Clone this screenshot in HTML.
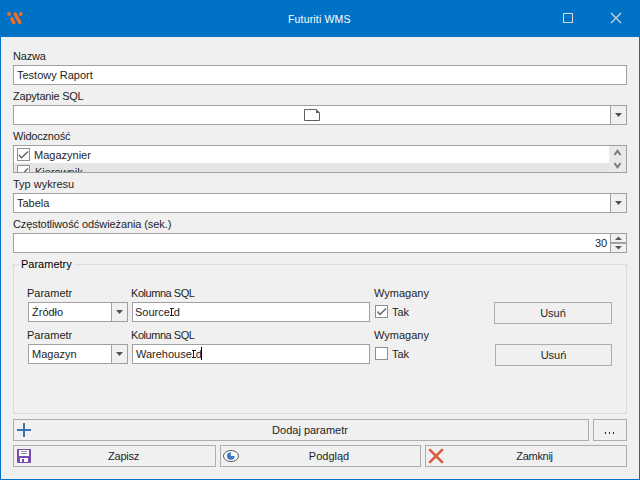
<!DOCTYPE html>
<html><head><meta charset="utf-8">
<style>
*{box-sizing:border-box;margin:0;padding:0}
html,body{width:640px;height:480px;overflow:hidden;background:#F0F0F0}
body{position:relative;font-family:"Liberation Sans",sans-serif;font-size:11px;color:#1E1E1E}
.a{position:absolute}
.win{position:absolute;left:0;top:0;width:640px;height:480px;border:1px solid #0072C6;border-top:none;background:#F0F0F0}
.title{position:absolute;left:0;top:0;width:640px;height:37px;background:#0072C6}
.lbl{position:absolute;white-space:nowrap;line-height:13px;height:13px}
.box{position:absolute;background:#fff;border:1px solid #A0A0A0}
.btn{position:absolute;background:#F0F0F0;border:1px solid #ADADAD}
.ddb{position:absolute;background:#F0F0F0;border-left:1px solid #A0A0A0}
svg{position:absolute;overflow:visible}
.cb{position:absolute;width:13px;height:13px;border:1px solid #8F8F8F;background:#fff}
.I{display:inline-block;width:4px;height:8px;margin:0;border-top:1px solid #1E1E1E;border-bottom:1px solid #1E1E1E;background:linear-gradient(#1E1E1E,#1E1E1E) no-repeat 1.5px 0/1px 100%}
.ct{position:absolute;white-space:nowrap;line-height:13px;height:13px;text-align:center}
</style></head><body>
<div class="win"></div>
<div class="title"></div>
<!-- app icon -->
<svg style="left:0;top:0" width="40" height="37">
  <g fill="#F26D21" stroke="#F26D21" stroke-linecap="round">
    <circle cx="9" cy="14" r="1.9" stroke="none"/>
    <circle cx="20.8" cy="14" r="1.9" stroke="none"/>
    <line x1="15.2" y1="14" x2="19.9" y2="22.6" stroke-width="3.4"/>
    <line x1="11.8" y1="18.9" x2="13.8" y2="22.8" stroke-width="3.4"/>
  </g>
</svg>
<div class="lbl" style="left:288px;top:13px;color:#fff;font-size:10.5px;letter-spacing:0.17px">Futuriti WMS</div>
<!-- maximize / close -->
<svg style="left:0;top:0" width="640" height="37">
  <rect x="563.5" y="13.5" width="9" height="9" fill="none" stroke="#DADADA" stroke-width="1"/>
  <path d="M611 13 L621 23 M621 13 L611 23" stroke="#DADADA" stroke-width="1.1" fill="none"/>
</svg>

<div class="lbl" style="left:13px;top:50px;letter-spacing:-0.2px">Nazwa</div>
<div class="box" style="left:13px;top:65px;width:614px;height:20px"></div>
<div class="lbl" style="left:17px;top:69px">Testowy Raport</div>

<div class="lbl" style="left:13px;top:90px;letter-spacing:-0.22px">Zapytanie SQL</div>
<div class="box" style="left:13px;top:105px;width:614px;height:20px"><div class="ddb" style="left:596px;top:0;width:16px;height:18px"></div></div>
<svg style="left:0;top:0" width="640" height="480">
  <path d="M304.5 109.5 H316 L319.5 113 V120.5 H304.5 Z" fill="#fff" stroke="#5F5F5F" stroke-width="1"/>
  <path d="M316 109 L320 113 H316 Z" fill="#5F5F5F"/>
  <path d="M615 113 H622 L618.5 117 Z" fill="#525252"/>
</svg>

<div class="lbl" style="left:13px;top:130px;letter-spacing:-0.2px">Widoczność</div>
<div class="box" style="left:13px;top:145px;width:614px;height:28px;overflow:hidden">
  <div class="a" style="left:0;top:17px;width:595px;height:10px;background:#E5E5E5"></div>
  <div class="a" style="left:595px;top:0;width:17px;height:26px;background:#E9E9E9"></div>
</div>
<div class="cb" style="left:17px;top:148px"></div>
<div class="lbl" style="left:34px;top:149px">Magazynier</div>
<div class="a" style="left:14px;top:163px;width:594px;height:9px;overflow:hidden">
  <div class="cb" style="left:3px;top:2px"></div>
  <svg style="left:0;top:0" width="40" height="20"><path d="M5 9 L7.5 11.8 L14 5.5" stroke="#5A5A5A" stroke-width="1.2" fill="none"/></svg>
  <div class="lbl" style="left:21px;top:3px">Kierownik</div>
</div>
<svg style="left:0;top:0" width="640" height="480">
  <path d="M19 155 L21.5 157.8 L28 151.5" stroke="#5A5A5A" stroke-width="1.2" fill="none"/>
  <path d="M614.5 155 L617.5 150.8 L620.5 155" stroke="#7C7C7C" stroke-width="2" fill="none"/>
  <path d="M614.5 163.2 L617.5 167.4 L620.5 163.2" stroke="#7C7C7C" stroke-width="2" fill="none"/>
</svg>

<div class="lbl" style="left:13px;top:178px">Typ wykresu</div>
<div class="box" style="left:13px;top:193px;width:614px;height:20px"><div class="ddb" style="left:596px;top:0;width:16px;height:18px"></div></div>
<div class="lbl" style="left:17px;top:197px">Tabela</div>
<svg style="left:0;top:0" width="640" height="480"><path d="M615 201 H622 L618.5 205 Z" fill="#525252"/></svg>

<div class="lbl" style="left:13px;top:218px;letter-spacing:-0.1px">Częstotliwość odświeżania (sek.)</div>
<div class="box" style="left:13px;top:233px;width:614px;height:20px"><div class="ddb" style="left:596px;top:0;width:16px;height:18px"><div class="a" style="left:0;top:8px;width:15px;height:2px;background:#A0A0A0"></div></div></div>
<div class="lbl" style="left:595px;top:237px">30</div>
<svg style="left:0;top:0" width="640" height="480">
  <path d="M615 240 H622 L618.5 236.5 Z" fill="#585858"/>
  <path d="M615 246 H622 L618.5 249.5 Z" fill="#585858"/>
</svg>

<!-- group box -->
<div class="a" style="left:13px;top:264px;width:614px;height:150px;border:1px solid #DCDCDC"></div>
<div class="lbl" style="left:19px;top:258px;padding:0 2px;background:#F0F0F0;color:#000">Parametry</div>

<!-- row 1 -->
<div class="lbl" style="left:27px;top:287px">Parametr</div>
<div class="box" style="left:28px;top:302px;width:100px;height:20px"><div class="ddb" style="left:82px;top:0;width:16px;height:18px"></div></div>
<div class="lbl" style="left:32px;top:306px">Źródło</div>
<div class="lbl" style="left:131px;top:287px;letter-spacing:-0.45px">Kolumna SQL</div>
<div class="box" style="left:132px;top:302px;width:238px;height:20px"></div>
<div class="lbl" style="left:135px;top:306px">Source<span class="I"></span>d</div>
<div class="lbl" style="left:374px;top:287px">Wymagany</div>
<div class="cb" style="left:375px;top:305px"></div>
<div class="lbl" style="left:392px;top:306px">Tak</div>
<div class="btn" style="left:494px;top:302px;width:118px;height:22px"></div>
<div class="ct" style="left:494px;top:307px;width:118px">Usuń</div>

<!-- row 2 -->
<div class="lbl" style="left:27px;top:329px">Parametr</div>
<div class="box" style="left:28px;top:344px;width:100px;height:20px"><div class="ddb" style="left:82px;top:0;width:16px;height:18px"></div></div>
<div class="lbl" style="left:32px;top:348px">Magazyn</div>
<div class="lbl" style="left:131px;top:329px;letter-spacing:-0.45px">Kolumna SQL</div>
<div class="box" style="left:132px;top:344px;width:238px;height:20px"></div>
<div class="lbl" style="left:136px;top:348px">Warehouse<span class="I"></span>d</div>
<div class="a" style="left:201px;top:347px;width:1px;height:13px;background:#000"></div>
<div class="lbl" style="left:374px;top:329px">Wymagany</div>
<div class="cb" style="left:375px;top:347px"></div>
<div class="lbl" style="left:392px;top:348px">Tak</div>
<div class="btn" style="left:495px;top:344px;width:117px;height:22px"></div>
<div class="ct" style="left:495px;top:349px;width:117px">Usuń</div>

<svg style="left:0;top:0" width="640" height="480">
  <path d="M116 310 H123 L119.5 314 Z" fill="#525252"/>
  <path d="M116 352 H123 L119.5 356 Z" fill="#525252"/>
  <path d="M377.5 311.5 L380 314.5 L386 308.5" stroke="#5A5A5A" stroke-width="1.2" fill="none"/>
</svg>

<!-- bottom buttons -->
<div class="btn" style="left:13px;top:419px;width:576px;height:22px"></div>
<div class="ct" style="left:32px;top:424px;width:556px">Dodaj parametr</div>
<div class="btn" style="left:593px;top:419px;width:34px;height:22px"></div>
<svg style="left:0;top:0" width="640" height="480">
  <rect x="605" y="432" width="1" height="2" fill="#202020"/>
  <rect x="609" y="432" width="1" height="2" fill="#202020"/>
  <rect x="613" y="432" width="1" height="2" fill="#202020"/>
</svg>

<div class="btn" style="left:13px;top:445px;width:203px;height:22px"></div>
<div class="ct" style="left:32px;top:450px;width:183px;letter-spacing:-0.25px">Zapisz</div>
<div class="btn" style="left:220px;top:445px;width:201px;height:22px"></div>
<div class="ct" style="left:238px;top:450px;width:182px">Podgląd</div>
<div class="btn" style="left:425px;top:445px;width:202px;height:22px"></div>
<div class="ct" style="left:443px;top:450px;width:183px;letter-spacing:-0.28px">Zamknij</div>

<svg style="left:0;top:0" width="640" height="480">
  <!-- plus -->
  <rect x="23" y="423" width="2" height="14" fill="#3B72B5"/>
  <rect x="17" y="429" width="14" height="2" fill="#3B72B5"/>
  <!-- floppy -->
  <path d="M17 449 H31 V462 Q31 463 30 463 H18 Q17 463 17 462 Z" fill="#7D4BAF"/>
  <rect x="19" y="450" width="10" height="6" fill="#fff"/>
  <rect x="21" y="451" width="6" height="1" fill="#9A9A9A"/>
  <rect x="21" y="453" width="6" height="1" fill="#9A9A9A"/>
  <rect x="20" y="458" width="8" height="4" fill="#fff"/>
  <rect x="22" y="459" width="2" height="3" fill="#7D4BAF"/>
  <!-- eye -->
  <ellipse cx="231" cy="456" rx="7.5" ry="5.5" fill="#fff" stroke="#5A5A5A" stroke-width="1"/>
  <path d="M230.8 456 V452.2 A3.8 3.8 0 1 0 234.6 456 Z" fill="#3B78C0"/>
  <!-- close X -->
  <path d="M429.9 449.9 L442.1 462.1 M442.1 449.9 L429.9 462.1" stroke="#DD5A3A" stroke-width="2.6" stroke-linecap="round"/>
</svg>
</body></html>
